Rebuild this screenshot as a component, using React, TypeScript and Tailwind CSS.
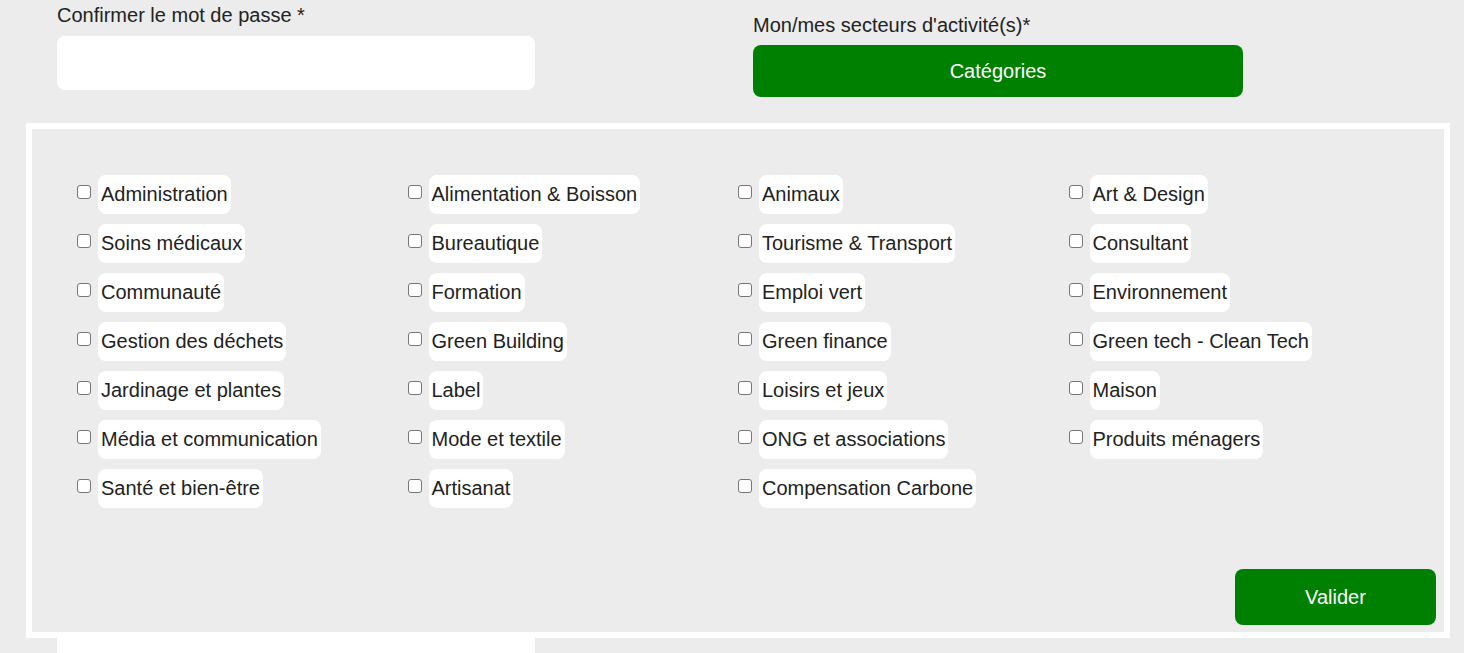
import React from "react";

const items: string[] = [
  "Administration",
  "Alimentation & Boisson",
  "Animaux",
  "Art & Design",
  "Soins médicaux",
  "Bureautique",
  "Tourisme & Transport",
  "Consultant",
  "Communauté",
  "Formation",
  "Emploi vert",
  "Environnement",
  "Gestion des déchets",
  "Green Building",
  "Green finance",
  "Green tech - Clean Tech",
  "Jardinage et plantes",
  "Label",
  "Loisirs et jeux",
  "Maison",
  "Média et communication",
  "Mode et textile",
  "ONG et associations",
  "Produits ménagers",
  "Santé et bien-être",
  "Artisanat",
  "Compensation Carbone",
];

export default function App() {
  return (
    <div
      className="h-[653px] w-full overflow-hidden bg-[#ececec] text-[#222]"
      style={{ fontFamily: '"Liberation Sans", Arial, sans-serif' }}
    >
      <div className="flex items-start">
        <div className="ml-[57px] w-[478px] pt-[4px]">
          <div className="text-[20px] leading-[23px]">Confirmer le mot de passe *</div>
          <div className="mt-[9px] h-[54px] rounded-[8px] bg-white" />
        </div>
        <div className="ml-[218px] w-[490px] pt-[14px]">
          <div className="text-[20px] leading-[23px]">Mon/mes secteurs d'activité(s)*</div>
          <button className="mt-[8px] flex h-[52px] w-full items-center justify-center rounded-[8px] bg-[#008000] text-[20px] text-white">
            Catégories
          </button>
        </div>
      </div>

      <div className="ml-[26px] mt-[26px] flex h-[515px] w-[1424px] flex-col border-[6px] border-white bg-[#ececec]">
        <div className="grid grid-cols-4 gap-y-[10px] px-[45px] pt-[46px]">
          {items.map((it) => (
            <div key={it} className="flex items-start">
              <input
                type="checkbox"
                className="m-0 mt-[10px] h-[14px] w-[14px] shrink-0 appearance-none rounded-[3px] border border-[#767676] bg-white"
              />
              <span className="ml-[7px] flex h-[39px] items-center rounded-[8px] bg-white px-[3px] text-[20px] leading-[23px]">
                {it}
              </span>
            </div>
          ))}
        </div>
        <div className="mt-auto flex justify-end pb-[7px] pr-[8px]">
          <button className="flex h-[56px] w-[201px] items-center justify-center rounded-[8px] bg-[#008000] text-[20px] text-white">
            Valider
          </button>
        </div>
      </div>

      <div className="ml-[57px] h-[54px] w-[478px] bg-white" />
    </div>
  );
}
